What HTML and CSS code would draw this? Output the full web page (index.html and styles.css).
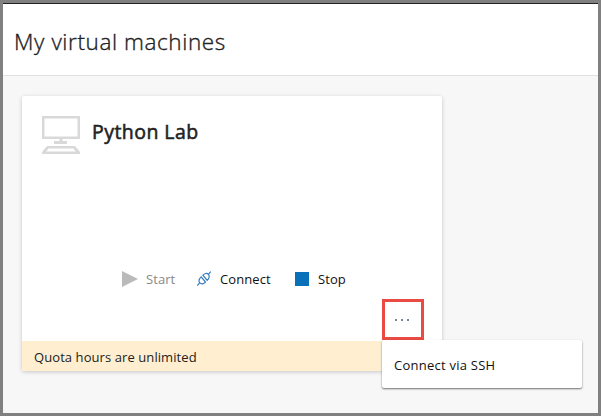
FILE: index.html
```html
<!DOCTYPE html>
<html lang="en">
<head>
<meta charset="utf-8">
<title>My virtual machines</title>
<link rel="stylesheet" href="styles.css">
</head>
<body>
<div class="window">
  <header class="header"><h1 class="title">My virtual machines</h1></header>
  <main class="content">
    <section class="card">
      <div class="card-head">
        <svg class="computer" width="38" height="38" viewBox="0 0 38 38" fill="#d9d9d9">
          <path fill-rule="evenodd" d="M0 0h38v23H0zM2.500 2.500v18h33v-18z"/>
          <path d="M17.500 23h3v2H25v3H12v-3h5.500z"/>
          <path fill-rule="evenodd" d="M5 30h28l5 6v2H0v-2zM6.500 32.500L4.300 35.500h29.400l-2.200-3z"/>
        </svg>
        <h2 class="name">Python Lab</h2>
      </div>
      <div class="actions">
        <button class="action start" disabled>
          <svg width="16" height="16" viewBox="0 0 16 16"><path d="M0 0l16 8-16 8z" fill="#bababa"/></svg>
          <span>Start</span>
        </button>
        <button class="action connect">
          <svg class="plug" width="14" height="15" viewBox="0 0 14 15" fill="none" stroke="#347bbf" stroke-width="1.200">
            <path d="M.3 14.500l2.300-2.700M11.600 3.200L13.700.6"/>
            <path d="M4.200 5.900l4.300 5.200C6.800 13.100 4.300 13.400 2.700 11.700 1.200 10 2.200 7.500 4.200 5.900z"/>
            <path d="M5.900 4.200l4.300 5.200c2-1.600 2.700-4.300 1.200-6C9.900 1.700 7.600 2.400 5.900 4.200z"/>
          </svg>
          <span>Connect</span>
        </button>
        <button class="action stop"><i class="square"></i><span>Stop</span></button>
      </div>
      <footer class="quota"><span>Quota hours are unlimited</span></footer>
      <button class="more" aria-label="More"><i></i><i></i><i></i></button>
      <div class="menu"><span>Connect via SSH</span></div>
    </section>
  </main>
</div>
</body>
</html>
```
FILE: styles.css
```css
* { box-sizing: border-box; }
body {
  margin: 0;
  font-family: "Open Sans", "Noto Sans", sans-serif;
  font-size: 13px;
  letter-spacing: 0.08px;
  color: #222;
}
h1, h2 { margin: 0; }
button { border: 0; padding: 0; background: none; font: inherit; letter-spacing: inherit; color: inherit; }
svg { display: block; flex: none; }
.window {
  height: 416px;
  border: 3px solid #808080;
  background: #f7f7f7;
}
.header {
  height: 73px;
  padding: 4px 11px 0;
  display: flex;
  align-items: center;
  background: #fff;
  border-top: 1px solid #222;
  border-bottom: 1px solid #e1e1e1;
}
.title {
  font-size: 22.5px;
  font-weight: 300;
  -webkit-text-stroke: 0.35px #222;
  line-height: 30px;
  letter-spacing: 0.6px;
  white-space: nowrap;
}
.content { padding: 20px 19px; }
.card {
  position: relative;
  width: 420px;
  height: 275px;
  display: flex;
  flex-direction: column;
  background: #fff;
  border-radius: 2px;
  box-shadow: 0 1px 4px rgba(0, 0, 0, 0.2);
}
.card-head { display: flex; gap: 12px; padding: 20px 20px 0; }
.name {
  font-size: 19.5px;
  font-weight: 400;
  -webkit-text-stroke: 0.55px #222;
  line-height: 31px;
  letter-spacing: 0.45px;
  white-space: nowrap;
}
.actions {
  display: flex;
  margin-top: auto;
  margin-bottom: 52px;
  padding-left: 100px;
  height: 20px;
}
.action { display: flex; align-items: center; gap: 8px; white-space: nowrap; color: #111; text-align: left; }
.start { width: 75px; color: #888; }
.plug { margin-top: -2px; }
.connect { width: 98px; gap: 9px; }
.stop { gap: 9px; }
.square { width: 14px; height: 14px; background: #0871b9; }
.quota {
  height: 30px;
  padding: 2px 12px 0;
  line-height: 28px;
  background: #ffefd0;
  border-radius: 0 0 2px 2px;
}
.more {
  position: absolute;
  left: 360px;
  top: 203px;
  width: 42px;
  height: 41px;
  display: flex;
  align-items: center;
  justify-content: center;
  gap: 4px;
  padding-right: 2px;
  background: #fff;
  border: 3px solid #e94b43;
}
.more i { width: 2px; height: 2px; background: #708598; }
.menu {
  position: absolute;
  left: 360px;
  top: 244px;
  width: 200px;
  height: 48px;
  padding: 1px 12px 0;
  display: flex;
  align-items: center;
  background: #fff;
  color: #111;
  letter-spacing: 0.25px;
  border-radius: 2px;
  box-shadow: 0 1px 2px rgba(0, 0, 0, 0.55);
}
```
